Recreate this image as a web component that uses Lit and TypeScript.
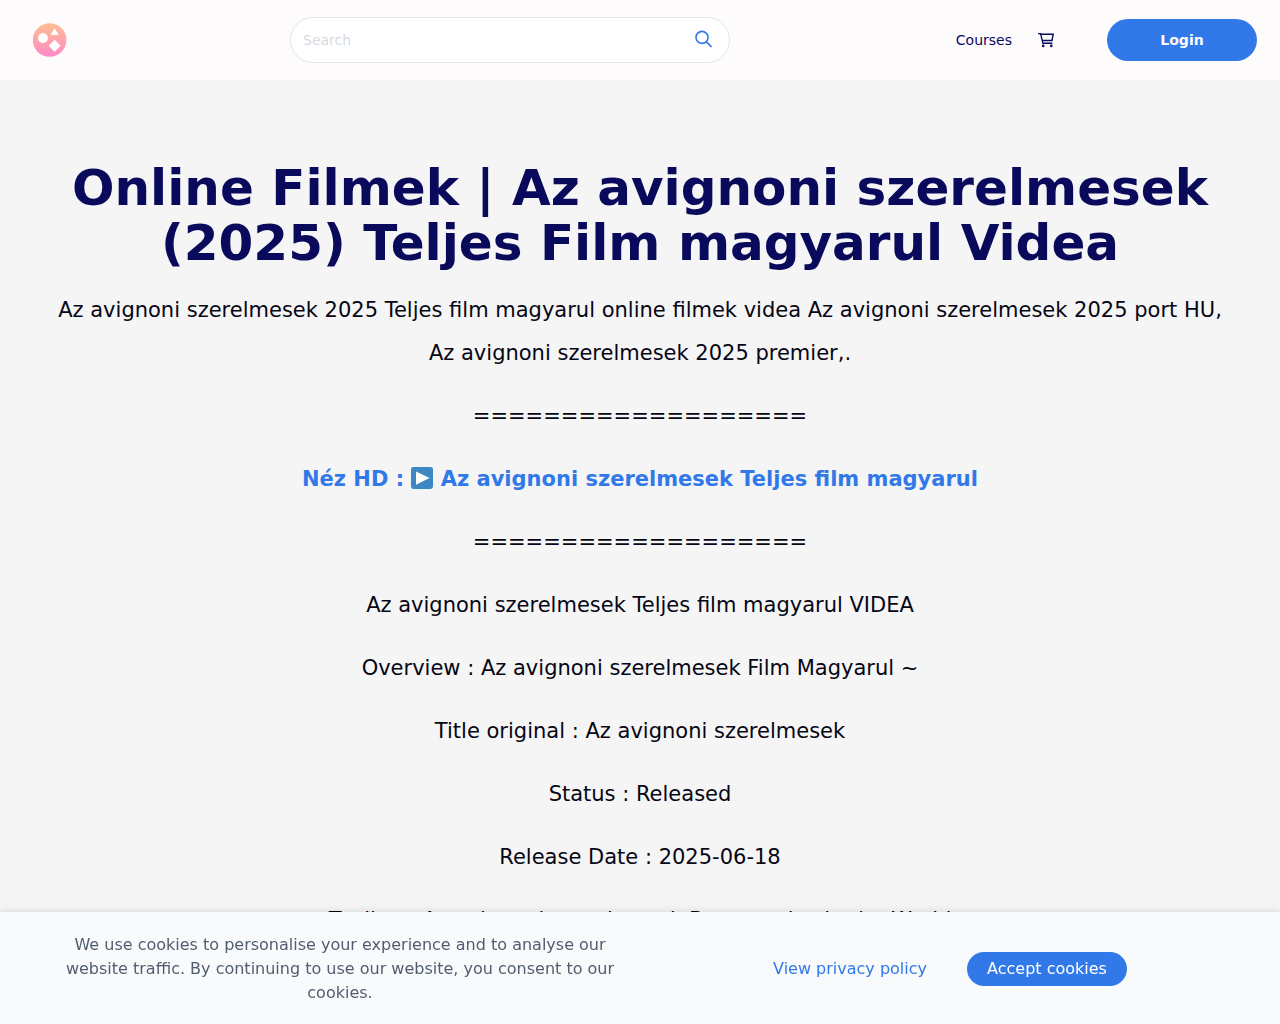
import { LitElement, html, css } from "lit";
import { customElement } from "lit/decorators.js";

const DIVIDER = "===================";

const DETAILS = [
  "Az avignoni szerelmesek Teljes film magyarul VIDEA",
  "Overview : Az avignoni szerelmesek Film Magyarul ~",
  "Title original : Az avignoni szerelmesek",
  "Status : Released",
  "Release Date : 2025-06-18",
  "Tagline : Az avignoni szerelmesek Best movies in the World",
];

@customElement("site-header")
export class SiteHeader extends LitElement {
  static styles = css`
    :host {
      display: block;
      background: #fefbfc;
    }
    .bar {
      display: flex;
      align-items: center;
      height: 80px;
      box-sizing: border-box;
      padding: 0 23px 0 33px;
    }
    .logo {
      display: block;
      line-height: 0;
      margin-right: 223px;
    }
    .search {
      display: flex;
      align-items: center;
      flex: 0 1 440px;
      height: 46px;
      box-sizing: border-box;
      padding: 0 16px 0 12px;
      border: 1px solid #e4e4e6;
      border-radius: 23px;
      background: #fff;
    }
    .field {
      flex: 1;
      min-width: 0;
      padding: 0;
      border: 0;
      outline: 0;
      background: none;
      font: inherit;
      color: #0a0a5c;
    }
    .field::placeholder {
      color: #d5dbe3;
      opacity: 1;
    }
    .icon-button {
      display: block;
      padding: 0;
      border: 0;
      background: none;
      line-height: 0;
      cursor: pointer;
    }
    .nav {
      display: flex;
      align-items: center;
      margin-left: auto;
    }
    .link {
      color: #0a0a5c;
      text-decoration: none;
      margin-right: 24px;
    }
    .cart {
      margin-right: 51px;
    }
    .login {
      width: 150px;
      height: 42px;
      padding: 0;
      border: 0;
      border-radius: 21px;
      background: #3179e9;
      color: #fefbfc;
      font: inherit;
      font-weight: 700;
      cursor: pointer;
    }
  `;

  render() {
    return html`
      <header class="bar">
        <a class="logo" href="#" aria-label="Home">
          <svg width="34" height="34" viewBox="0 0 34 34">
            <defs>
              <linearGradient id="glow" x1="0" y1="0" x2="0" y2="1">
                <stop offset="0" stop-color="#ffbf91" />
                <stop offset="1" stop-color="#ff8ac8" />
              </linearGradient>
            </defs>
            <circle cx="16.6" cy="17" r="16.8" fill="url(#glow)" />
            <circle cx="10" cy="15" r="4.9" fill="#fff" />
            <path d="M21.6 5 25.6 12H17.6Z" fill="#fff" />
            <path d="M21.6 16.8 27.6 22.8 21.6 28.8 15.6 22.8Z" fill="#fff" />
          </svg>
        </a>
        <form class="search" role="search">
          <input class="field" type="search" placeholder="Search" aria-label="Search" />
          <button class="icon-button" type="button" aria-label="Submit search">
            <svg width="18" height="20" viewBox="0 0 18 20" fill="none" stroke="#3179e9">
              <circle cx="7" cy="7.4" r="6" stroke-width="1.6" />
              <path d="M11.2 11.6 16.6 17" stroke-width="1.7" />
            </svg>
          </button>
        </form>
        <nav class="nav">
          <a class="link" href="#">Courses</a>
          <button class="icon-button cart" type="button" aria-label="Cart">
            <svg width="20" height="18" viewBox="0 0 20 18" fill="none" stroke="#0a0a5c" stroke-width="1.4">
              <path d="M2 2.6H4.6L6.9 12.3H16.4" />
              <path d="M4.8 3.2H17.2L16 9.5H6.2" />
              <circle cx="7.2" cy="14.9" r="1.3" fill="#0a0a5c" stroke="none" />
              <circle cx="15.3" cy="14.9" r="1.3" fill="#0a0a5c" stroke="none" />
            </svg>
          </button>
          <button class="login" type="button">Login</button>
        </nav>
      </header>
    `;
  }
}

@customElement("cookie-banner")
export class CookieBanner extends LitElement {
  static styles = css`
    :host {
      position: fixed;
      left: 0;
      right: 0;
      bottom: 0;
      background: #f8fafb;
      box-shadow: 0 0 8px rgba(0, 0, 0, 0.14);
      font-size: 16px;
      line-height: 24px;
    }
    .inner {
      display: grid;
      grid-template-columns: 620px 1fr;
      align-items: center;
      padding: 21px 30px 19px;
    }
    .message {
      margin: 0;
      padding: 0 20px;
      text-align: center;
      color: #525d70;
    }
    .actions {
      display: flex;
      align-items: center;
      justify-content: center;
      gap: 40px;
    }
    .policy {
      color: #3179e9;
      text-decoration: none;
    }
    .accept {
      height: 34px;
      padding: 0 20px;
      border: 0;
      border-radius: 17px;
      background: #3179e9;
      color: #fff;
      font: inherit;
      cursor: pointer;
    }
  `;

  render() {
    return html`
      <div class="inner">
        <p class="message">
          We use cookies to personalise your experience and to analyse our website traffic. By continuing to use our
          website, you consent to our cookies.
        </p>
        <div class="actions">
          <a class="policy" href="#">View privacy policy</a>
          <button class="accept" type="button">Accept cookies</button>
        </div>
      </div>
    `;
  }
}

@customElement("app-root")
export class AppRoot extends LitElement {
  static styles = css`
    :host {
      display: block;
      height: 100vh;
      overflow: hidden;
      background: #f5f5f5;
      font-family: "DejaVu Sans", sans-serif;
      font-size: 14px;
    }
    .content {
      padding: 81px 44px;
      text-align: center;
      color: #060614;
    }
    .title {
      margin: 0 0 18px;
      font-size: 50px;
      line-height: 55px;
      font-weight: 700;
      color: #0a0a5c;
    }
    .text {
      margin: 0 0 20px;
      font-size: 21px;
      line-height: 43px;
    }
    .watch {
      color: #3179e9;
      font-weight: 700;
      text-decoration: none;
    }
    .play {
      vertical-align: -3px;
    }
  `;

  render() {
    return html`
      <site-header></site-header>
      <main class="content">
        <h1 class="title">Online Filmek | Az avignoni szerelmesek (2025) Teljes Film magyarul Videa</h1>
        <p class="text">
          Az avignoni szerelmesek 2025 Teljes film magyarul online filmek videa Az avignoni szerelmesek 2025 port HU, Az
          avignoni szerelmesek 2025 premier,.
        </p>
        <p class="text">${DIVIDER}</p>
        <p class="text">
          <a class="watch" href="#"
            >Néz HD :
            <svg class="play" width="22" height="22" viewBox="0 0 22 22" aria-hidden="true">
              <rect width="22" height="22" rx="2.4" fill="#3b88c3" />
              <path d="M5 4.6 18.6 11 5 17.8Z" fill="#fff" />
            </svg>
            Az avignoni szerelmesek Teljes film magyarul</a
          >
        </p>
        <p class="text">${DIVIDER}</p>
        ${DETAILS.map((line) => html`<p class="text">${line}</p>`)}
      </main>
      <cookie-banner></cookie-banner>
    `;
  }
}
